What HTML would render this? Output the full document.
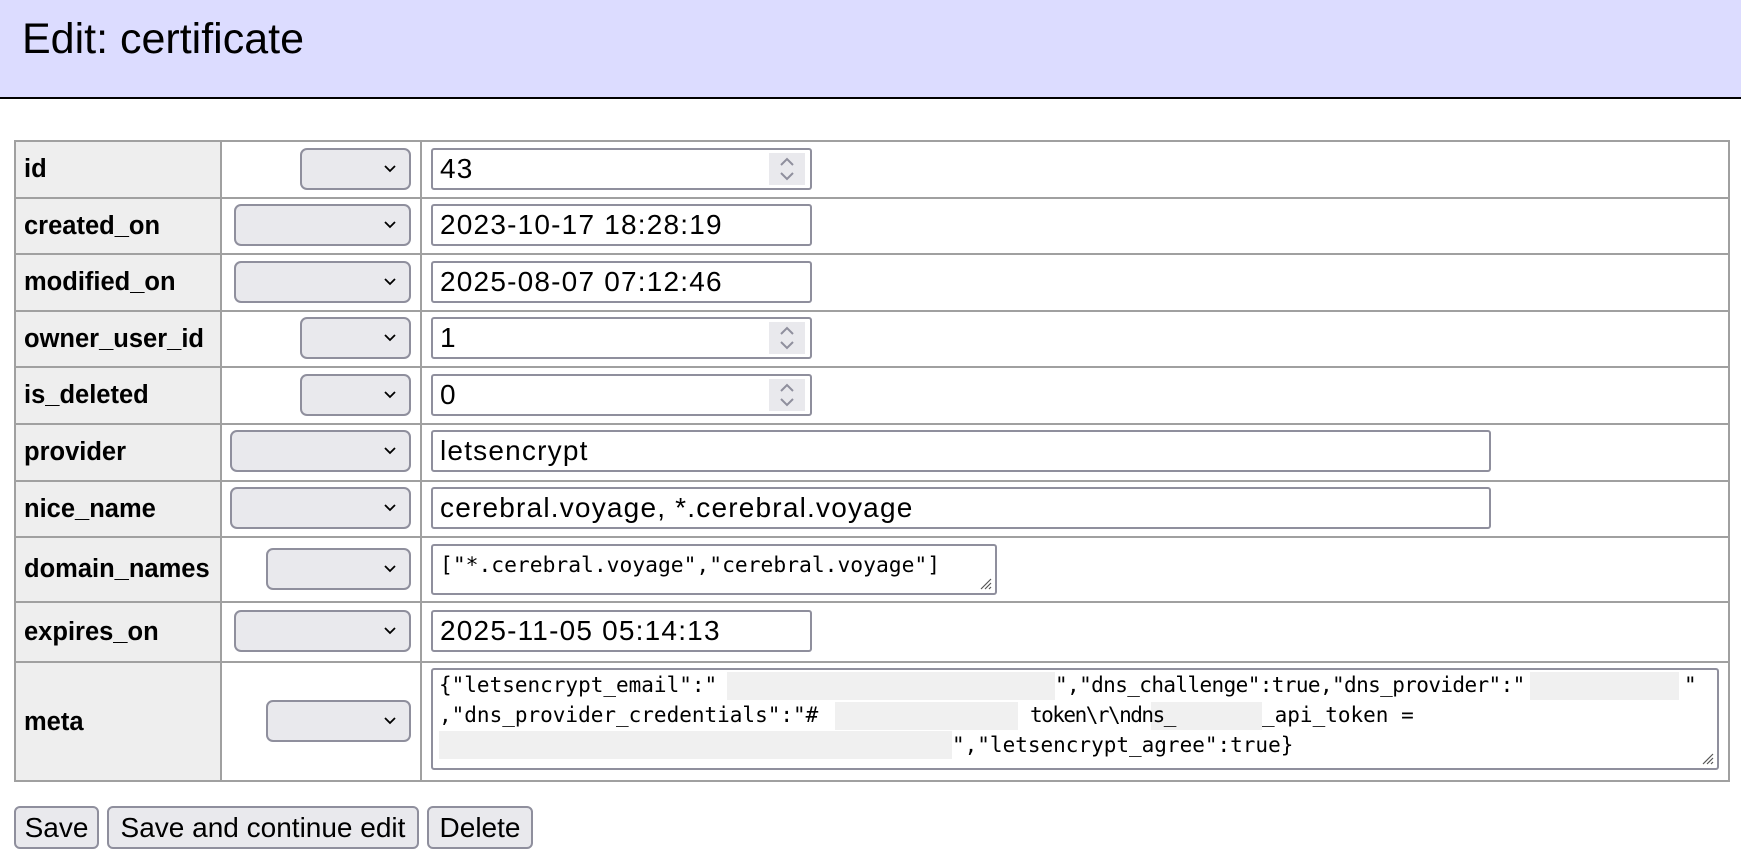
<!DOCTYPE html>
<html><head><meta charset="utf-8"><style>
*{box-sizing:border-box;margin:0;padding:0}
body{width:1741px;height:859px;background:#fff;position:relative;overflow:hidden;font-family:"Liberation Sans",Arial,sans-serif;color:#000}
.hdr{position:absolute;left:0;top:0;width:1741px;height:99px;background:#dcdcff;border-bottom:2px solid #000}
.hdr h1{position:absolute;left:22px;top:15px;font-size:43px;font-weight:normal}
.hl{position:absolute;left:14px;width:1716px;height:2px;background:#a0a0a0}
.vl{position:absolute;top:140px;width:2px;height:642px;background:#a0a0a0}
.lab{position:absolute;left:16px;width:205px;background:#eee;font-weight:bold;font-size:25.5px;padding-left:8px;display:flex;align-items:center}
.sel{position:absolute;height:42px;background:#e9e9ed;border:2px solid #8f8f9d;border-radius:7px}
.sel svg{position:absolute;right:12px;top:14px}
.inp{position:absolute;left:431px;height:42px;border:2px solid #8f8f9d;border-radius:3px;font-size:28px;padding-left:7px;line-height:38px;letter-spacing:1.2px;white-space:nowrap}
.spin{position:absolute;right:5px;top:3px;width:36px;height:32px;background:#e9e9ed}
.mono{font-family:"DejaVu Sans Mono","Liberation Mono",monospace;font-size:21px;letter-spacing:0}
.mt{position:absolute;font-family:"DejaVu Sans Mono","Liberation Mono",monospace;font-size:21px;line-height:27px;height:27px;white-space:pre}
.r{position:absolute;background:#f0f0f0;height:28px}
.btn{position:absolute;top:806px;height:43px;background:#e9e9ed;border:2px solid #8f8f9d;border-radius:6px;font-size:28px;text-align:center;line-height:39px;white-space:nowrap}
.grip{position:absolute;right:3px;bottom:3px}
</style></head><body>
<div class="hdr"><h1>Edit: certificate</h1></div>

<div class="lab" style="top:142px;height:55px">id</div>
<div class="lab" style="top:199px;height:54px">created_on</div>
<div class="lab" style="top:255px;height:55px">modified_on</div>
<div class="lab" style="top:312px;height:54px">owner_user_id</div>
<div class="lab" style="top:368px;height:55px">is_deleted</div>
<div class="lab" style="top:425px;height:55px">provider</div>
<div class="lab" style="top:482px;height:54px">nice_name</div>
<div class="lab" style="top:538px;height:63px">domain_names</div>
<div class="lab" style="top:603px;height:58px">expires_on</div>
<div class="lab" style="top:663px;height:118px">meta</div>

<div class="hl" style="top:140px"></div>
<div class="hl" style="top:197px"></div>
<div class="hl" style="top:253px"></div>
<div class="hl" style="top:310px"></div>
<div class="hl" style="top:366px"></div>
<div class="hl" style="top:423px"></div>
<div class="hl" style="top:480px"></div>
<div class="hl" style="top:536px"></div>
<div class="hl" style="top:601px"></div>
<div class="hl" style="top:661px"></div>
<div class="hl" style="top:780px"></div>
<div class="vl" style="left:14px"></div>
<div class="vl" style="left:220px"></div>
<div class="vl" style="left:420px"></div>
<div class="vl" style="left:1728px"></div>

<div class="sel" style="left:300px;top:148px;width:111px"><svg width="14" height="10"><path d="M2 2 L7 7 L12 2" stroke="#000" stroke-width="1.8" fill="none"/></svg></div>
<div class="sel" style="left:234px;top:204px;width:177px"><svg width="14" height="10"><path d="M2 2 L7 7 L12 2" stroke="#000" stroke-width="1.8" fill="none"/></svg></div>
<div class="sel" style="left:234px;top:261px;width:177px"><svg width="14" height="10"><path d="M2 2 L7 7 L12 2" stroke="#000" stroke-width="1.8" fill="none"/></svg></div>
<div class="sel" style="left:300px;top:317px;width:111px"><svg width="14" height="10"><path d="M2 2 L7 7 L12 2" stroke="#000" stroke-width="1.8" fill="none"/></svg></div>
<div class="sel" style="left:300px;top:374px;width:111px"><svg width="14" height="10"><path d="M2 2 L7 7 L12 2" stroke="#000" stroke-width="1.8" fill="none"/></svg></div>
<div class="sel" style="left:230px;top:430px;width:181px"><svg width="14" height="10"><path d="M2 2 L7 7 L12 2" stroke="#000" stroke-width="1.8" fill="none"/></svg></div>
<div class="sel" style="left:230px;top:487px;width:181px"><svg width="14" height="10"><path d="M2 2 L7 7 L12 2" stroke="#000" stroke-width="1.8" fill="none"/></svg></div>
<div class="sel" style="left:266px;top:548px;width:145px"><svg width="14" height="10"><path d="M2 2 L7 7 L12 2" stroke="#000" stroke-width="1.8" fill="none"/></svg></div>
<div class="sel" style="left:234px;top:610px;width:177px"><svg width="14" height="10"><path d="M2 2 L7 7 L12 2" stroke="#000" stroke-width="1.8" fill="none"/></svg></div>
<div class="sel" style="left:266px;top:700px;width:145px"><svg width="14" height="10"><path d="M2 2 L7 7 L12 2" stroke="#000" stroke-width="1.8" fill="none"/></svg></div>

<div class="inp" style="top:148px;width:381px">43<div class="spin"><svg width="36" height="32"><path d="M12 12 L18 6 L24 12 M12 20 L18 26 L24 20" stroke="#8f8f9d" stroke-width="2" fill="none"/></svg></div></div>
<div class="inp" style="top:204px;width:381px">2023-10-17 18:28:19</div>
<div class="inp" style="top:261px;width:381px">2025-08-07 07:12:46</div>
<div class="inp" style="top:317px;width:381px">1<div class="spin"><svg width="36" height="32"><path d="M12 12 L18 6 L24 12 M12 20 L18 26 L24 20" stroke="#8f8f9d" stroke-width="2" fill="none"/></svg></div></div>
<div class="inp" style="top:374px;width:381px">0<div class="spin"><svg width="36" height="32"><path d="M12 12 L18 6 L24 12 M12 20 L18 26 L24 20" stroke="#8f8f9d" stroke-width="2" fill="none"/></svg></div></div>
<div class="inp" style="top:430px;width:1060px">letsencrypt</div>
<div class="inp" style="top:487px;width:1060px">cerebral.voyage, *.cerebral.voyage</div>
<div class="inp mono" style="top:544px;width:566px;height:51px;line-height:30px;padding-top:5px;font-size:21.3px">["*.cerebral.voyage","cerebral.voyage"]<svg class="grip" width="14" height="14"><path d="M13 3 L3 13 M13 7 L7 13 M13 11 L11 13" stroke="#555" stroke-width="1.2"/></svg></div>
<div class="inp" style="top:610px;width:381px">2025-11-05 05:14:13</div>
<div class="inp" style="top:668px;width:1288px;height:102px"><svg class="grip" width="14" height="14"><path d="M13 3 L3 13 M13 7 L7 13 M13 11 L11 13" stroke="#555" stroke-width="1.2"/></svg></div>

<div class="r" style="left:727px;top:672px;width:328px"></div>
<div class="r" style="left:1530px;top:672px;width:149px"></div>
<div class="r" style="left:835px;top:702px;width:183px"></div>
<div class="r" style="left:1151px;top:702px;width:111px"></div>
<div class="r" style="left:439px;top:731px;width:513px"></div>

<div class="mt" style="left:439px;top:672px">{"letsencrypt_email":"</div>
<div class="mt" style="left:1055px;top:672px;letter-spacing:-0.6px">","dns_challenge":true,"dns_provider":"</div>
<div class="mt" style="left:1684px;top:672px">"</div>
<div class="mt" style="left:439px;top:702px">,"dns_provider_credentials":"#</div>
<div class="mt" style="left:1030px;top:702px;letter-spacing:-1.5px">token\r\ndns_</div>
<div class="mt" style="left:1262px;top:702px">_api_token =</div>
<div class="mt" style="left:952px;top:732px">","letsencrypt_agree":true}</div>

<div class="btn" style="left:14px;width:85px">Save</div>
<div class="btn" style="left:107px;width:312px">Save and continue edit</div>
<div class="btn" style="left:427px;width:106px">Delete</div>
</body></html>
